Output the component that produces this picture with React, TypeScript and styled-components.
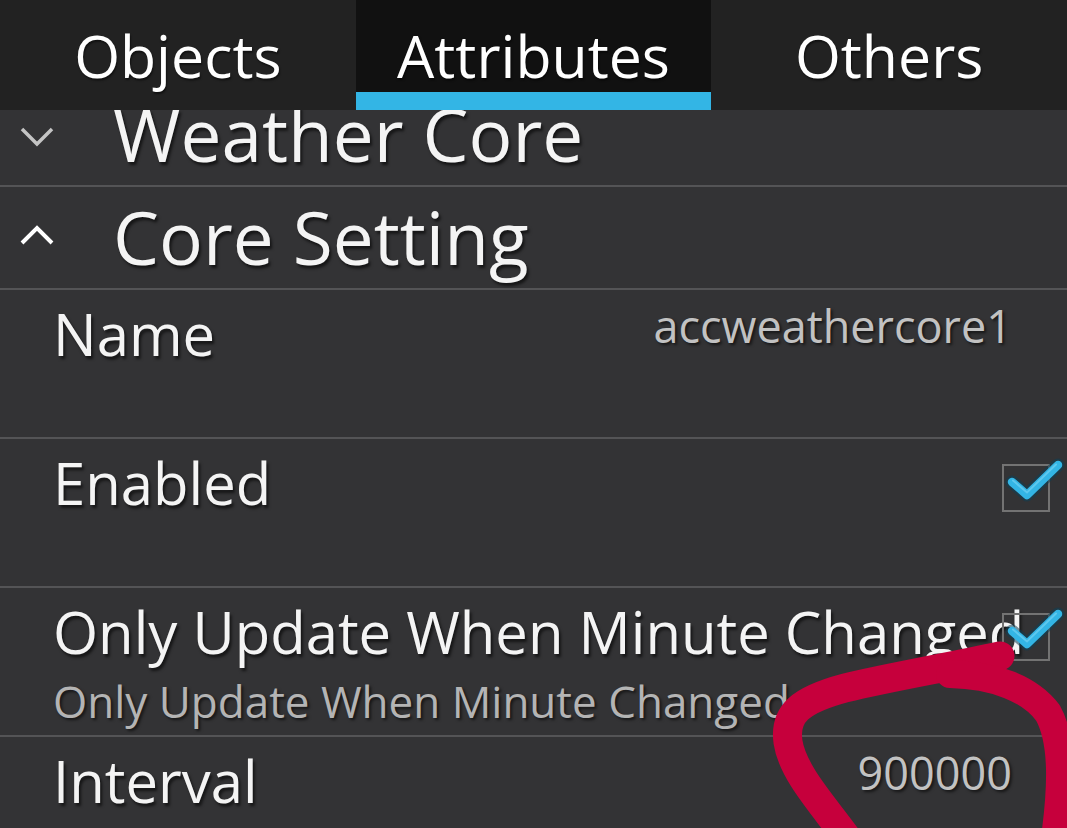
import React, { useLayoutEffect, useRef } from "react";
import styled, { createGlobalStyle } from "styled-components";

const GlobalStyle = createGlobalStyle`
  html, body {
    margin: 0;
    padding: 0;
    background: #333335;
    overflow: hidden;
  }
  * { box-sizing: border-box; }
`;

const tabs = ["Objects", "Attributes", "Others"];

const Chevron = ({ up }: { up?: boolean }) => (
  <Caret viewBox="0 0 40 40" width="40" height="40">
    {up ? (
      <polyline points="5,25 20,10 35,25" fill="none" stroke="#ffffff" strokeWidth="4" />
    ) : (
      <polyline points="5,14 20,29 35,14" fill="none" stroke="#c4c4c4" strokeWidth="3.5" />
    )}
  </Caret>
);

const CheckBox = () => (
  <Box>
    <svg width="70" height="60" viewBox="0 0 70 60">
      <path
        d="M10 19 L25 32 L56 2"
        fill="none"
        stroke="#0c3f55"
        strokeWidth="13"
        strokeLinecap="round"
        strokeLinejoin="round"
        opacity="0.55"
      />
      <path
        d="M10 19 L25 32 L56 2"
        fill="none"
        stroke="#33b5e5"
        strokeWidth="8.5"
        strokeLinecap="round"
        strokeLinejoin="round"
      />
      <path
        d="M11 17.5 L25 29.5 L54 1.5"
        fill="none"
        stroke="#6fd0f2"
        strokeWidth="2"
        strokeLinecap="round"
        opacity="0.7"
      />
    </svg>
  </Box>
);

const App = () => {
  const listRef = useRef<HTMLDivElement>(null);

  // the list is scrolled a little, Weather Core is half under the tabs
  useLayoutEffect(() => {
    if (listRef.current) listRef.current.scrollTop = 26;
  }, []);

  return (
    <Screen>
      <GlobalStyle />
      <TabBar>
        {tabs.map((t) => (
          <Tab key={t} active={t === "Attributes"}>
            <TabLabel>{t}</TabLabel>
            <Indicator active={t === "Attributes"} />
          </Tab>
        ))}
      </TabBar>

      <List ref={listRef}>
        <Group>
          <Chevron />
          <GroupTitle>Weather Core</GroupTitle>
        </Group>
        <Group>
          <Chevron up />
          <GroupTitle>Core Setting</GroupTitle>
        </Group>

        <Row>
          <LabelCol>
            <Label>Name</Label>
          </LabelCol>
          <Value>accweathercore1</Value>
        </Row>
        <Row>
          <LabelCol>
            <Label>Enabled</Label>
          </LabelCol>
          <CheckBox />
        </Row>
        <Row>
          <LabelCol>
            <Label>Only Update When Minute Changed</Label>
            <Sub>Only Update When Minute Changed</Sub>
          </LabelCol>
          <CheckBox />
        </Row>
        <Row>
          <LabelCol>
            <Label>Interval</Label>
          </LabelCol>
          <Value>900000</Value>
        </Row>
      </List>

      <Scribble viewBox="0 0 1067 828" width="1067" height="828">
        <path
          d="M852 845 C828 810 793 775 788 742 C784 714 800 700 845 688 C890 677 950 667 1000 656"
          fill="none"
          stroke="#c6003c"
          strokeWidth="29"
          strokeLinecap="round"
        />
        <path
          d="M950 674 C995 675 1030 689 1048 713 C1064 742 1062 790 1054 845"
          fill="none"
          stroke="#c6003c"
          strokeWidth="28"
          strokeLinecap="round"
        />
      </Scribble>
    </Screen>
  );
};

export default App;

const Screen = styled.div`
  width: 100vw;
  height: 100vh;
  display: flex;
  flex-direction: column;
  position: relative;
  background: #333335;
  font-family: "Open Sans", "DejaVu Sans", sans-serif;
  overflow: hidden;
`;

const TabBar = styled.div`
  height: 110px;
  flex-shrink: 0;
  display: flex;
  background: #222222;
`;

const Tab = styled.div<{ active?: boolean }>`
  flex: 1;
  display: flex;
  flex-direction: column;
  background: ${(p) => (p.active ? "#111111" : "#222222")};
`;

const TabLabel = styled.div`
  height: 92px;
  padding-top: 18px;
  display: flex;
  align-items: center;
  justify-content: center;
  color: #ffffff;
  font-size: 59px;
  line-height: 1;
  text-shadow: 1px 2px 2px rgba(0, 0, 0, 0.5);
`;

const Indicator = styled.div<{ active?: boolean }>`
  height: 18px;
  background: ${(p) => (p.active ? "#33b5e5" : "transparent")};
`;

const List = styled.div`
  flex: 1;
  overflow: hidden;
`;

const Group = styled.div`
  height: 103px;
  display: flex;
  align-items: flex-start;
  padding: 6px 0 0 17px;
  gap: 56px;
  border-bottom: 2px solid #545456;
`;

const Caret = styled.svg`
  flex-shrink: 0;
  margin-top: 25px;
`;

const GroupTitle = styled.div`
  color: #f4f4f4;
  font-size: 73px;
  line-height: 1.2;
  white-space: nowrap;
  text-shadow: 2px 3px 3px rgba(0, 0, 0, 0.6);
`;

const Row = styled.div`
  min-height: 149px;
  display: flex;
  align-items: flex-start;
  padding: 9px 17px 0 53px;
  border-bottom: 2px solid #545456;
`;

const LabelCol = styled.div`
  flex: 1;
  min-width: 0;
  display: flex;
  flex-direction: column;
  white-space: nowrap;
`;

const Label = styled.div`
  color: #f4f4f4;
  font-size: 58px;
  line-height: 70px;
  text-shadow: 2px 3px 3px rgba(0, 0, 0, 0.6);
`;

const Sub = styled.div`
  margin-top: 8px;
  color: #b4b4b4;
  font-size: 44px;
  line-height: 52px;
  text-shadow: 2px 2px 3px rgba(0, 0, 0, 0.6);
`;

const Value = styled.div`
  padding-right: 38px;
  color: #c2c2c2;
  font-size: 45px;
  line-height: 54px;
  white-space: nowrap;
  text-shadow: 2px 2px 3px rgba(0, 0, 0, 0.6);
`;

const Box = styled.div`
  position: relative;
  flex-shrink: 0;
  width: 48px;
  height: 48px;
  margin-top: 16px;
  border: 2px solid #737373;

  svg {
    position: absolute;
    left: -2px;
    top: -3px;
    overflow: visible;
  }
`;

const Scribble = styled.svg`
  position: absolute;
  left: 0;
  top: 0;
  pointer-events: none;
`;
